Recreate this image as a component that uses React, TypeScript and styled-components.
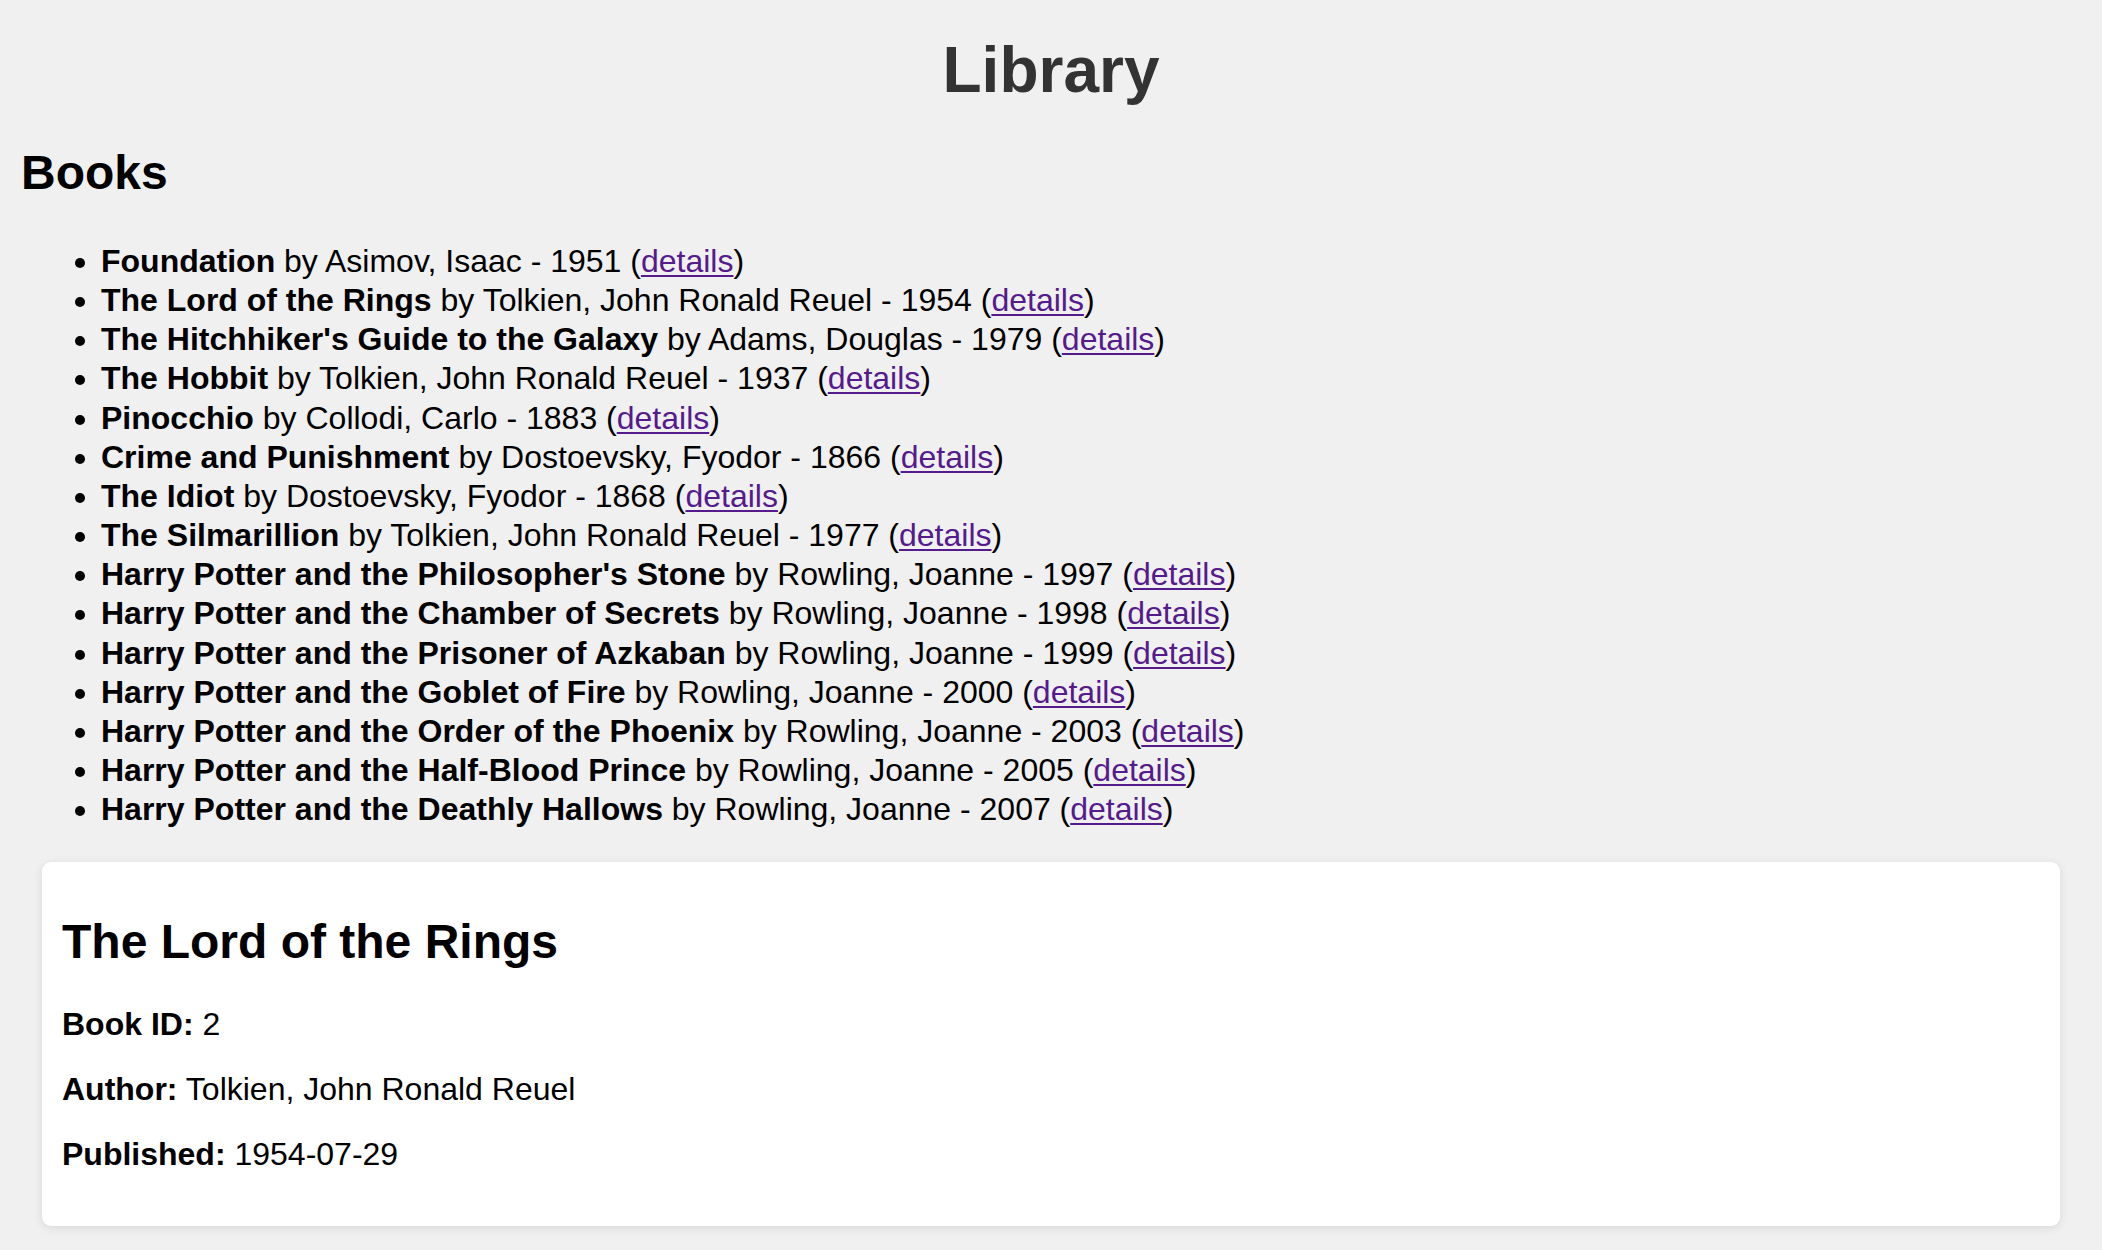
import React from "react"
import styled, { createGlobalStyle } from "styled-components"

interface Book {
    id: number
    title: string
    author: string
    year: number
    published: string
}

const books: Book[] = [
    { id: 1, title: "Foundation", author: "Asimov, Isaac", year: 1951, published: "1951-06-01" },
    { id: 2, title: "The Lord of the Rings", author: "Tolkien, John Ronald Reuel", year: 1954, published: "1954-07-29" },
    { id: 3, title: "The Hitchhiker's Guide to the Galaxy", author: "Adams, Douglas", year: 1979, published: "1979-10-12" },
    { id: 4, title: "The Hobbit", author: "Tolkien, John Ronald Reuel", year: 1937, published: "1937-09-21" },
    { id: 5, title: "Pinocchio", author: "Collodi, Carlo", year: 1883, published: "1883-02-01" },
    { id: 6, title: "Crime and Punishment", author: "Dostoevsky, Fyodor", year: 1866, published: "1866-01-01" },
    { id: 7, title: "The Idiot", author: "Dostoevsky, Fyodor", year: 1868, published: "1868-01-01" },
    { id: 8, title: "The Silmarillion", author: "Tolkien, John Ronald Reuel", year: 1977, published: "1977-09-15" },
    { id: 9, title: "Harry Potter and the Philosopher's Stone", author: "Rowling, Joanne", year: 1997, published: "1997-06-26" },
    { id: 10, title: "Harry Potter and the Chamber of Secrets", author: "Rowling, Joanne", year: 1998, published: "1998-07-02" },
    { id: 11, title: "Harry Potter and the Prisoner of Azkaban", author: "Rowling, Joanne", year: 1999, published: "1999-07-08" },
    { id: 12, title: "Harry Potter and the Goblet of Fire", author: "Rowling, Joanne", year: 2000, published: "2000-07-08" },
    { id: 13, title: "Harry Potter and the Order of the Phoenix", author: "Rowling, Joanne", year: 2003, published: "2003-06-21" },
    { id: 14, title: "Harry Potter and the Half-Blood Prince", author: "Rowling, Joanne", year: 2005, published: "2005-07-16" },
    { id: 15, title: "Harry Potter and the Deathly Hallows", author: "Rowling, Joanne", year: 2007, published: "2007-07-21" },
]

const GlobalStyle = createGlobalStyle`
    body {
        margin: 0;
        background-color: #f0f0f0;
        font-family: "Liberation Sans", Arial, Helvetica, sans-serif;
        color: #000;
    }
`

const Page = styled.div`
    padding: 0 21px 26px;
    display: flow-root;
`

const Title = styled.h1`
    margin: 33px 0 0;
    font-size: 64px;
    line-height: 74px;
    text-align: center;
    color: #333;
`

const SectionTitle = styled.h2`
    margin: 37.5px 0 0;
    font-size: 48px;
    line-height: 56px;
`

const BookList = styled.ul`
    margin: 41.5px 0 0;
    padding-left: 80px;
    font-size: 32px;
    line-height: 39.16px;
`

const BookItem = styled.li`
    list-style: disc;
`

const DetailsLink = styled.a`
    color: #551a8b;
    text-decoration: underline;
    text-underline-offset: 3px;
    text-decoration-thickness: 2px;
`

const DetailCard = styled.section`
    margin: 32.5px 21px 0;
    padding: 0 20px;
    background-color: #fff;
    border-radius: 9px;
    box-shadow: 0 2px 10px rgba(0, 0, 0, 0.1);
    display: flow-root;
`

const CardTitle = styled.h2`
    margin: 52px 0 0;
    font-size: 48px;
    line-height: 56px;
`

const Field = styled.p`
    margin: 0;
    font-size: 32px;
    line-height: 37px;

    & + & {
        margin-top: 28px;
    }

    &:first-of-type {
        margin-top: 36px;
    }

    &:last-child {
        margin-bottom: 53.5px;
    }
`

function BookRow({ book }: { book: Book }) {
    return (
        <BookItem>
            <strong>{book.title}</strong> by {book.author} - {book.year} (
            <DetailsLink href={`#book-${book.id}`}>details</DetailsLink>)
        </BookItem>
    )
}

function BookDetails({ book }: { book: Book }) {
    return (
        <DetailCard>
            <CardTitle>{book.title}</CardTitle>
            <Field><strong>Book ID:</strong> {book.id}</Field>
            <Field><strong>Author:</strong> {book.author}</Field>
            <Field><strong>Published:</strong> {book.published}</Field>
        </DetailCard>
    )
}

export default function App() {
    const selected = books[1]
    return (
        <>
            <GlobalStyle />
            <Page>
                <Title>Library</Title>
                <SectionTitle>Books</SectionTitle>
                <BookList>
                    {books.map(book => (
                        <BookRow key={book.id} book={book} />
                    ))}
                </BookList>
                <BookDetails book={selected} />
            </Page>
        </>
    )
}
